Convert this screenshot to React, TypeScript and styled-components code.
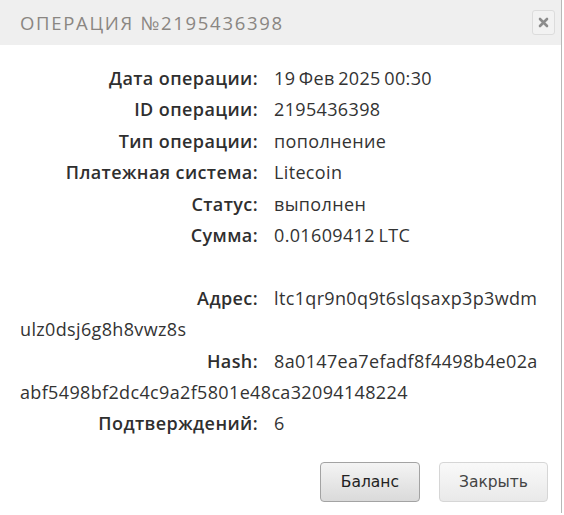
import React from 'react';
import styled, { createGlobalStyle } from 'styled-components';

interface Field {
  label: string;
  // long values are kept as the lines they are printed on
  value: string[];
}

const GlobalStyle = createGlobalStyle`
  html, body {
    margin: 0;
    padding: 0;
    background: #ffffff;
  }
`;

const Dialog = styled.div`
  width: 561px;
  height: 513px;
  border-right: 1px solid #b8b8b8;
  background: #ffffff;
  display: flex;
  flex-direction: column;
  font-family: 'Open Sans', 'Liberation Sans', sans-serif;
`;

const Header = styled.div`
  height: 45px;
  background: #efefef;
  display: flex;
  align-items: center;
  justify-content: space-between;
  padding: 0 6px 0 20px;
`;

const Title = styled.h2`
  margin: 0;
  font-size: 18.5px;
  font-weight: 400;
  letter-spacing: 1.7px;
  color: #8a8682;
  text-transform: uppercase;
`;

const CloseButton = styled.button`
  width: 23px;
  height: 25px;
  padding: 0;
  border: 1px solid #dcdcdc;
  border-radius: 3px;
  background: #f2f2f2;
  display: flex;
  align-items: center;
  justify-content: center;
  cursor: pointer;
`;

const Body = styled.div`
  padding: 18px 10px 0 20px;
  flex: 1;
`;

const Row = styled.div<{ $gapBefore?: boolean }>`
  font-size: 18px;
  line-height: 31.4px;
  color: #333333;
  letter-spacing: 0.35px;
  word-spacing: -1.5px;
  white-space: nowrap;
  margin-top: ${(p) => (p.$gapBefore ? '31.4px' : '0')};
`;

const Label = styled.span`
  display: inline-block;
  width: 238px;
  margin-right: 16px;
  text-align: right;
  font-weight: 600;
  letter-spacing: 0.4px;
  word-spacing: 0;
  color: #2f2f2f;
`;

const Footer = styled.div`
  display: flex;
  justify-content: flex-end;
  gap: 19px;
  padding: 0 13px 11px 0;
`;

const ActionButton = styled.button<{ $primary?: boolean }>`
  height: 40px;
  padding: 0 ${(p) => (p.$primary ? '20px' : '19px')};
  font-family: 'DejaVu Sans', 'Liberation Sans', sans-serif;
  font-size: 15.5px;
  color: ${(p) => (p.$primary ? '#222222' : '#444444')};
  border-radius: 4px;
  border: 1px solid ${(p) => (p.$primary ? '#a3a3a3' : '#d6d6d6')};
  background: ${(p) =>
    p.$primary
      ? 'linear-gradient(#f4f4f4, #dadada)'
      : 'linear-gradient(#f9f9f9, #e9e9e9)'};
  cursor: pointer;
`;

const topFields: Field[] = [
  { label: 'Дата операции:', value: ['19 Фев 2025 00:30'] },
  { label: 'ID операции:', value: ['2195436398'] },
  { label: 'Тип операции:', value: ['пополнение'] },
  { label: 'Платежная система:', value: ['Litecoin'] },
  { label: 'Статус:', value: ['выполнен'] },
  { label: 'Сумма:', value: ['0.01609412 LTC'] },
];

const chainFields: Field[] = [
  { label: 'Адрес:', value: ['ltc1qr9n0q9t6slqsaxp3p3wdm', 'ulz0dsj6g8h8vwz8s'] },
  { label: 'Hash:', value: ['8a0147ea7efadf8f4498b4e02a', 'abf5498bf2dc4c9a2f5801e48ca32094148224'] },
  { label: 'Подтверждений:', value: ['6'] },
];

const renderValue = (lines: string[]) =>
  lines.map((line, i) => (
    <React.Fragment key={i}>
      {i > 0 && <br />}
      {line}
    </React.Fragment>
  ));

const App: React.FC = () => {
  return (
    <>
      <GlobalStyle />
      <Dialog>
        <Header>
          <Title>Операция №2195436398</Title>
          <CloseButton aria-label="close">
            <svg width="11" height="11" viewBox="0 0 11 11">
              <path d="M2 2 L9 9 M9 2 L2 9" stroke="#8c8c8c" strokeWidth="2.6" strokeLinecap="round" />
            </svg>
          </CloseButton>
        </Header>
        <Body>
          {topFields.map((f) => (
            <Row key={f.label}>
              <Label>{f.label}</Label>
              {renderValue(f.value)}
            </Row>
          ))}
          {chainFields.map((f, i) => (
            <Row key={f.label} $gapBefore={i === 0}>
              <Label>{f.label}</Label>
              {renderValue(f.value)}
            </Row>
          ))}
        </Body>
        <Footer>
          <ActionButton $primary>Баланс</ActionButton>
          <ActionButton>Закрыть</ActionButton>
        </Footer>
      </Dialog>
    </>
  );
};

export default App;
